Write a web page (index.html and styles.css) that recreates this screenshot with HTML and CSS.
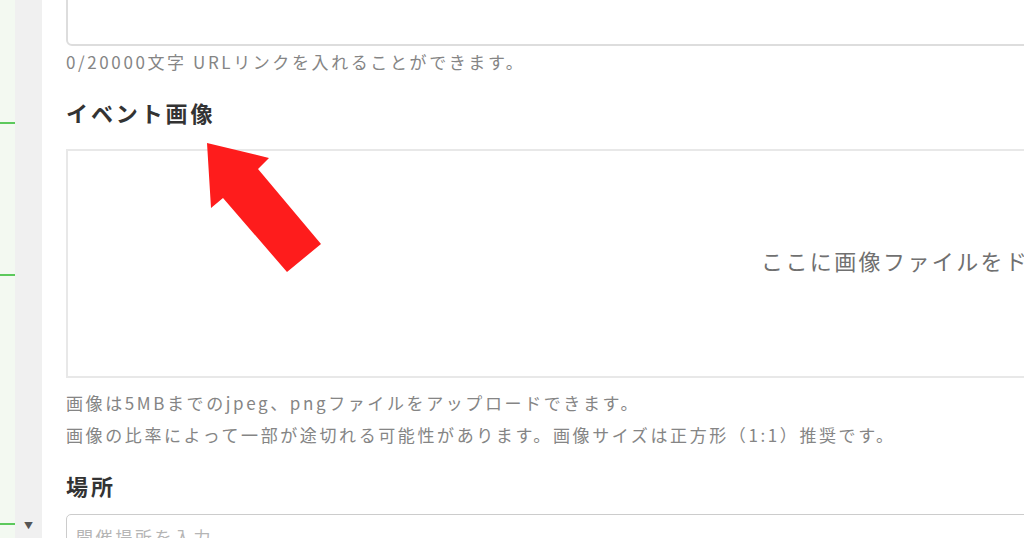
FILE: index.html
```html
<!DOCTYPE html>
<html lang="ja">

<head>
    <meta charset="utf-8">
    <title>イベント作成</title>
    <link rel="stylesheet" href="styles.css">
</head>

<body>
    <div class="page">
        <!-- 左のサイドバー -->
        <div class="side">
            <div class="side-menu">
                <div class="side-line line-1"></div>
                <div class="side-line line-2"></div>
                <div class="side-line line-3"></div>
            </div>
            <div class="side-bar">
                <span class="caret">&#9660;</span>
            </div>
        </div>

        <!-- フォーム -->
        <div class="form">
            <div class="textarea"></div>
            <p class="note">0/20000文字 URLリンクを入れることができます。</p>

            <h3 class="label">イベント画像</h3>
            <div class="dropzone">
                <span class="drop-text">ここに画像ファイルをドラッグ＆ドロップ</span>
            </div>
            <p class="note note-first">画像は5MBまでのjpeg、pngファイルをアップロードできます。</p>
            <p class="note note-second">画像の比率によって一部が途切れる可能性があります。画像サイズは正方形（1:1）推奨です。</p>

            <h3 class="label label-place">場所</h3>
            <input type="text" class="input" placeholder="開催場所を入力" />
        </div>
    </div>

    <!-- 赤い矢印 -->
    <svg class="arrow" width="1024" height="538" viewBox="0 0 1024 538">
        <polygon points="207,143 269,158 258,169 321,244 287,272 223,198 211,208" fill="#fe1c1c" />
    </svg>
</body>

</html>
```

FILE: styles.css
```css
body {
    margin: 0;
    font-family: "Noto Sans CJK JP", "Noto Sans", sans-serif;
    background-color: #ffffff;
    overflow: hidden;
}

.page {
    display: flex;
    height: 538px;
}

/* サイドバー */
.side {
    display: flex;
    width: 42px;
    flex-shrink: 0;
}

.side-menu {
    width: 15px;
    background-color: #f3f9f1;
    position: relative;
}

.side-line {
    position: absolute;
    left: 0;
    width: 15px;
    height: 2px;
    background-color: #5cc95c;
}

.line-1 {
    top: 122px;
}

.line-2 {
    top: 274px;
}

.line-3 {
    top: 523px;
}

.side-bar {
    flex: 1;
    background-color: #f0f0f0;
    display: flex;
    align-items: flex-end;
    justify-content: center;
}

.caret {
    font-size: 9px;
    color: #555555;
    margin-bottom: 6px;
}

/* フォーム */
.form {
    width: 1200px;
    flex-shrink: 0;
    padding-left: 24px;
    margin-top: -28px;
}

.textarea {
    height: 70px;
    border: 2px solid #dddddd;
    border-radius: 6px;
}

.note {
    margin: 4px 0 0;
    font-size: 17px;
    line-height: 24px;
    letter-spacing: 2.6px;
    color: #858585;
}

.label {
    margin: 23px 0 0;
    font-size: 22px;
    line-height: 30px;
    letter-spacing: 2.9px;
    font-weight: bold;
    color: #333333;
}

.dropzone {
    margin-top: 22px;
    height: 225px;
    border: 2px solid #e8e8e8;
    display: flex;
    align-items: center;
    box-sizing: content-box;
    padding: 0 0 8px 693px;
    height: 217px;
}

.drop-text {
    font-size: 22px;
    letter-spacing: 2.4px;
    color: #707070;
    white-space: nowrap;
}

.note-first {
    margin-top: 12px;
    line-height: 26px;
}

.note-second {
    margin-top: 6px;
    line-height: 26px;
}

.label-place {
    margin-top: 22px;
}

.input {
    display: block;
    box-sizing: border-box;
    width: 100%;
    height: 44px;
    margin-top: 14px;
    padding: 0 9px;
    border: 1px solid #cccccc;
    border-radius: 5px;
    font-family: inherit;
    font-size: 17px;
    letter-spacing: 2.6px;
}

.input::placeholder {
    color: #b5b5b5;
}

.arrow {
    position: absolute;
    top: 0;
    left: 0;
    pointer-events: none;
}
```
